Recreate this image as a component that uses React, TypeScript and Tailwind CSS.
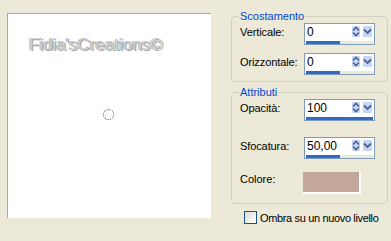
import React from 'react';

const font = { fontFamily: '"Liberation Sans", Arial, sans-serif' };

function SpinButtons() {
  return (
    <div className="flex items-center gap-[1px] pr-[1px] pt-[1px]">
      <div className="w-[10px] h-[13px] rounded-[2px] bg-[#c5d5fb] border border-white flex items-center justify-center">
        <svg width="8" height="11" viewBox="0 0 8 11">
          <path d="M1 4.5 L4 1.5 L7 4.5" fill="none" stroke="#4d6185" strokeWidth="1.6" />
          <path d="M1 6.5 L4 9.5 L7 6.5" fill="none" stroke="#4d6185" strokeWidth="1.6" />
        </svg>
      </div>
      <div className="w-[11px] h-[13px] rounded-[2px] bg-[#c5d5fb] border border-white flex items-center justify-center">
        <svg width="9" height="7" viewBox="0 0 9 7">
          <path d="M1 1.5 L4.5 5 L8 1.5" fill="none" stroke="#4d6185" strokeWidth="1.8" />
        </svg>
      </div>
    </div>
  );
}

function SpinField({ value, fill }: { value: string; fill: number }) {
  return (
    <div className="w-[71px] h-[22px] border border-[#7f9db9] bg-white flex flex-col">
      <div className="flex-1 flex items-start">
        <span className="flex-1 pl-[2px] pt-[2px] text-[12px] leading-[13px] text-black">{value}</span>
        <SpinButtons />
      </div>
      <div className="h-[3px] mx-[1px] bg-[#ece9d8]">
        <div className="h-full bg-[#316ac5]" style={{ width: `${fill}%` }} />
      </div>
    </div>
  );
}

function Row({ label, children, top }: { label: string; children: React.ReactNode; top: string }) {
  return (
    <div className={`flex items-start ${top}`}>
      <span className="w-[64px] pt-[3px] text-[11px] leading-[12px] text-black tracking-[-0.1px]">{label}</span>
      {children}
    </div>
  );
}

export default function App() {
  return (
    <div className="w-[391px] h-[241px] bg-[#ece9d8] flex overflow-hidden" style={font}>
      {/* anteprima */}
      <div className="ml-[7px] mt-[13px] w-[204px] h-[205px] bg-white border-l border-t border-[#aca899] flex flex-col">
        <div className="pl-[21px] pt-[22px] text-[17px] leading-[18px] text-[#d0d0d0] whitespace-nowrap [text-shadow:1px_1px_0_#a0a0a0,-1px_0_0_#b8b8b8]">
          Fidia's<span>Creations©</span>
        </div>
        <div className="ml-[95px] mt-[55px] w-[11px] h-[11px] rounded-full border border-dotted border-[#555]" />
      </div>

      {/* pannello destro */}
      <div className="ml-[20px] w-[157px] flex flex-col">
        <fieldset className="mt-[10px] border border-[#d0d0bf] rounded-[4px] pl-[8px] pb-[6px]">
          <legend className="-ml-[1px] px-[1px] text-[11px] leading-[12px] text-[#0046d5]">Scostamento</legend>
          <Row label="Verticale:" top="mt-[1px]">
            <SpinField value="0" fill={50} />
          </Row>
          <Row label="Orizzontale:" top="mt-[8px]">
            <SpinField value="0" fill={50} />
          </Row>
        </fieldset>

        <fieldset className="mt-[4px] border border-[#d0d0bf] rounded-[4px] pl-[8px] pb-[9px]">
          <legend className="-ml-[1px] px-[1px] text-[11px] leading-[12px] text-[#0046d5]">Attributi</legend>
          <Row label="Opacità:" top="mt-[1px]">
            <SpinField value="100" fill={100} />
          </Row>
          <Row label="Sfocatura:" top="mt-[16px]">
            <SpinField value="50,00" fill={50} />
          </Row>
          <div className="flex items-start mt-[13px]">
            <span className="w-[63px] pt-[1px] text-[11px] leading-[12px] text-black">Colore:</span>
            <div className="w-[58px] h-[22px] bg-[#c3a79b] border-r-2 border-b-2 border-white" />
          </div>
        </fieldset>

        <label className="mt-[7px] ml-[13px] flex items-center gap-[3px] whitespace-nowrap">
          <span className="w-[13px] h-[13px] shrink-0 border border-[#1c5180] bg-gradient-to-br from-[#dcdcd7] to-white" />
          <span className="text-[11px] leading-[12px] text-black tracking-[-0.35px]">Ombra su un nuovo livello</span>
        </label>
      </div>
    </div>
  );
}
